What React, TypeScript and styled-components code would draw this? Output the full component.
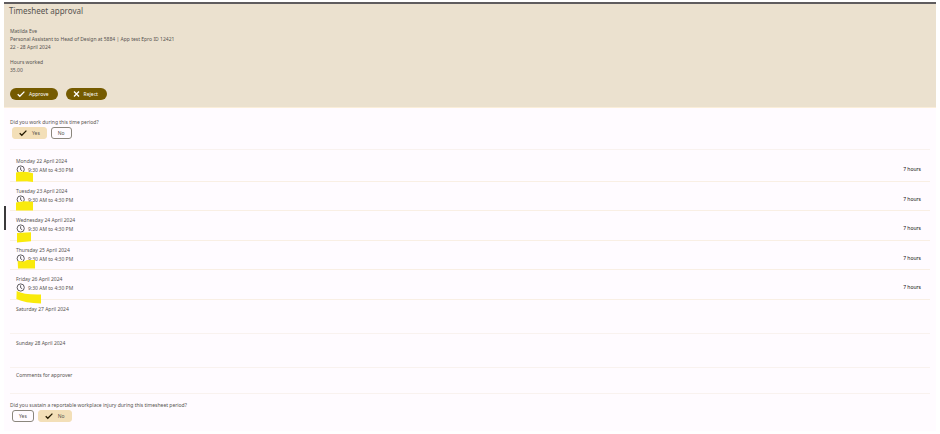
import React, { useState } from "react";
import styled, { createGlobalStyle } from "styled-components";

const GlobalStyle = createGlobalStyle`
  *, *::before, *::after { box-sizing: border-box; }
  body {
    margin: 0;
    background: #fff;
    color: #56534f;
    font: 5px/8px "Noto Sans", "Open Sans", sans-serif;
  }
`;

const Page = styled.main`
  position: relative;
  margin: 2px 4px 0;
  padding-bottom: 9px;
  border-top: 2px solid #5f5c5e;
  background: #fffbff;
`;

const ScrollMark = styled.span`
  position: absolute;
  top: 202px;
  left: 0;
  width: 2px;
  height: 24px;
  background: #3b393b;
`;

const Header = styled.header`
  padding: 0 6px 7px;
  background: #ebe1cf;
  border-bottom: 1px solid #fbeed9;
`;

const Title = styled.h1`
  margin: 0 -1px 10px;
  font-size: 8px;
  line-height: 13px;
  font-weight: 400;
`;

const Line = styled.p`
  margin: 0;
`;

const Details = styled.section`
  margin-bottom: 7px;
`;

const Actions = styled.div`
  display: flex;
  gap: 8px;
  padding-top: 7px;
`;

const Action = styled.button`
  display: flex;
  align-items: center;
  gap: 4px;
  height: 12px;
  padding: 0 9px 0 7px;
  border: 0;
  border-radius: 6px;
  background: #755b00;
  color: #fff;
  font: inherit;
`;

const Question = styled.fieldset<{ $first?: boolean }>`
  margin: 0;
  padding: ${(p) => (p.$first ? "10px 6px" : "7px 6px 0")};
  border: 0;
  min-width: 0;
`;

const Legend = styled.legend`
  float: left;
  width: 100%;
  padding: 0;
`;

const Choices = styled.div`
  clear: both;
  display: flex;
  gap: 4px;
  padding: 1px 2px 0;
`;

const Choice = styled.label<{ $on: boolean }>`
  position: relative;
  display: flex;
  align-items: center;
  justify-content: center;
  gap: 5px;
  height: 12px;
  padding: 0 6px;
  border: 1px solid ${(p) => (p.$on ? "#f3dfb8" : "#8b867d")};
  border-radius: 3px;
  background: ${(p) => (p.$on ? "#f3dfb8" : "transparent")};
`;

const HiddenRadio = styled.input`
  position: absolute;
  inset: 0;
  width: 100%;
  height: 100%;
  margin: 0;
  opacity: 0;
`;

const Days = styled.ul`
  list-style: none;
  margin: 0 6px;
  padding: 2px 0 0;
  border-top: 1px solid #f9f2ef;
`;

const Day = styled.li`
  position: relative;
  display: flex;
  justify-content: space-between;
  height: 30px;
  padding: 5px 9px 0 6px;
  border-bottom: 1px solid #f9efe4;

  &:nth-child(even) {
    height: 29px;
  }
`;

const Empty = styled.section<{ $short?: boolean }>`
  height: ${(p) => (p.$short ? "26px" : "34px")};
  margin: 0 6px;
  padding: ${(p) => (p.$short ? "3px 6px 0" : "5px 6px 0")};
  border-bottom: 1px solid #f9f2ef;
`;

const Shift = styled.div`
  display: flex;
  align-items: center;
  gap: 3px;
`;

const Hours = styled.strong`
  padding-top: 8px;
  font-weight: 400;
  color: #111;
`;

const Marker = styled.svg`
  position: absolute;
  top: 18px;
  left: 5px;
  width: 28px;
  height: 16px;
  pointer-events: none;
  z-index: 1;
`;

const Check = ({ color }: { color: string }) => (
  <svg width="8" height="8" viewBox="0 0 8 8" fill="none" stroke={color} strokeWidth="1.3" aria-hidden="true">
    <path d="M0.7 4.3 2.8 6.3 7.4 1.6" />
  </svg>
);

const Cross = () => (
  <svg width="7" height="8" viewBox="0 0 7 8" fill="none" stroke="currentColor" strokeWidth="1.3" aria-hidden="true">
    <path d="M1 1.5 6 6.5M6 1.5 1 6.5" />
  </svg>
);

const Clock = () => (
  <svg width="9" height="9" viewBox="0 0 9 9" fill="none" stroke="#39363a" strokeWidth="0.8" aria-hidden="true">
    <circle cx="4.7" cy="4.5" r="3.6" />
    <path d="M4.6 2.3V4.7L6.2 5.8" />
  </svg>
);

const days = [
  { name: "Monday 22 April 2024", mark: "M1 2.5Q8 .8 18 3.2V12L12 11.2 1 11.4Z" },
  { name: "Tuesday 23 April 2024", mark: "M1 2.5 9 1.2 18 1.8V10.4H1Z" },
  { name: "Wednesday 24 April 2024", mark: "M2 4 16 3.2V12.2L2 13.4Z" },
  { name: "Thursday 25 April 2024", mark: "M2.7 2 9 2.4 12 1 20 1V9.6H3Z" },
  { name: "Friday 26 April 2024", mark: "M1.7 3Q9 7 26 6.5V15.5Q10 15 1.4 11Z" },
];

function YesNo({ name, initial, text, first }: { name: string; initial: string; text: string; first?: boolean }) {
  const [value, setValue] = useState(initial);
  return (
    <Question $first={first}>
      <Legend>{text}</Legend>
      <Choices>
        {["Yes", "No"].map((option) => (
          <Choice key={option} $on={value === option}>
            <HiddenRadio
              type="radio"
              name={name}
              value={option}
              checked={value === option}
              onChange={() => setValue(option)}
            />
            {value === option && <Check color="#241a00" />}
            {option}
          </Choice>
        ))}
      </Choices>
    </Question>
  );
}

export default function App() {
  return (
    <>
      <GlobalStyle />
      <Page>
        <ScrollMark />
        <Header>
          <Title>Timesheet approval</Title>
          <Details>
            <Line>Matilda Eve</Line>
            <Line>Personal Assistant to Head of Design at 5884 | App test Epro ID 12421</Line>
            <Line>22 - 28 April 2024</Line>
          </Details>
          <Details>
            <Line>Hours worked</Line>
            <Line>35.00</Line>
          </Details>
          <Actions>
            <Action type="button"><Check color="#fff" />Approve</Action>
            <Action type="button"><Cross />Reject</Action>
          </Actions>
        </Header>
        <YesNo first name="worked" initial="Yes" text="Did you work during this time period?" />
        <Days>
          {days.map((day) => (
            <Day key={day.name}>
              <div>
                <Line>{day.name}</Line>
                <Shift><Clock />9:30 AM to 4:30 PM</Shift>
              </div>
              <Hours>7 hours</Hours>
              <Marker viewBox="0 0 28 16" aria-hidden="true">
                <path d={day.mark} fill="#f9ea0c" />
              </Marker>
            </Day>
          ))}
        </Days>
        <Empty>Saturday 27 April 2024</Empty>
        <Empty>Sunday 28 April 2024</Empty>
        <Empty $short>Comments for approver</Empty>
        <YesNo name="injury" initial="No" text="Did you sustain a reportable workplace injury during this timesheet period?" />
      </Page>
    </>
  );
}
